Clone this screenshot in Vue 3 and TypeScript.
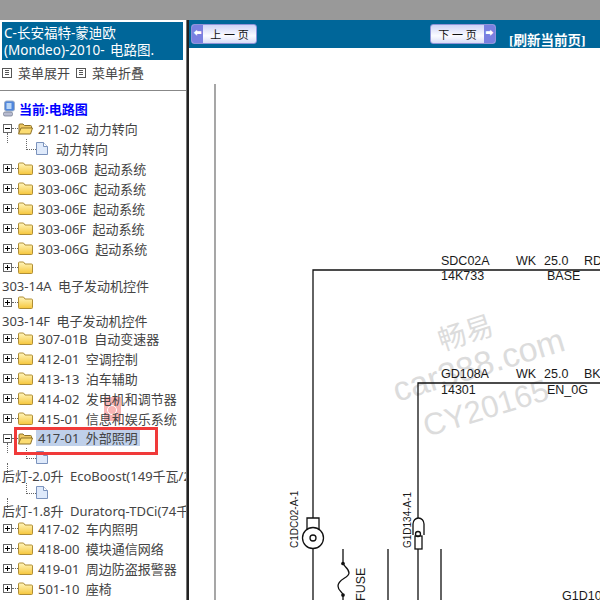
<script setup lang="ts">
interface Row { kind: 'folder' | 'open' | 'leaf' | 'wrapFolder' | 'wrapLeaf'; label: string }
const rows: Row[] = [
  { kind: 'open', label: '211-02 动力转向' },
  { kind: 'leaf', label: '动力转向' },
  { kind: 'folder', label: '303-06B 起动系统' },
  { kind: 'folder', label: '303-06C 起动系统' },
  { kind: 'folder', label: '303-06E 起动系统' },
  { kind: 'folder', label: '303-06F 起动系统' },
  { kind: 'folder', label: '303-06G 起动系统' },
  { kind: 'wrapFolder', label: '303-14A 电子发动机控件' },
  { kind: 'wrapFolder', label: '303-14F 电子发动机控件' },
  { kind: 'folder', label: '307-01B 自动变速器' },
  { kind: 'folder', label: '412-01 空调控制' },
  { kind: 'folder', label: '413-13 泊车辅助' },
  { kind: 'folder', label: '414-02 发电机和调节器' },
  { kind: 'folder', label: '415-01 信息和娱乐系统' },
  { kind: 'open', label: '417-01 外部照明' },
  { kind: 'wrapLeaf', label: '后灯-2.0升 EcoBoost(149千瓦/203马力)' },
  { kind: 'wrapLeaf', label: '后灯-1.8升 Duratorq-TDCi(74千瓦)' },
  { kind: 'folder', label: '417-02 车内照明' },
  { kind: 'folder', label: '418-00 模块通信网络' },
  { kind: 'folder', label: '419-01 周边防盗报警器' },
  { kind: 'folder', label: '501-10 座椅' },
]
const isFolder = (k: Row['kind']) => k === 'folder' || k === 'open' || k === 'wrapFolder'
const isLeaf = (k: Row['kind']) => k === 'leaf' || k === 'wrapLeaf'
const wrapped = (k: Row['kind']) => k === 'wrapFolder' || k === 'wrapLeaf'
</script>

<template>
  <div class="page">
    <div class="topbar"></div>
    <div class="main">
      <aside class="side">
        <div class="pink"><i></i></div>
        <div class="title">C-长安福特-蒙迪欧<br />(Mondeo)-2010- 电路图.</div>
        <div class="menu">
          <span class="menu-item"><i class="mi"></i>菜单展开</span>
          <span class="menu-item"><i class="mi"></i>菜单折叠</span>
        </div>
        <div class="tree">
          <div class="root">
            <svg width="14" height="17" viewBox="0 0 14 17">
              <rect x="2.500" y="1" width="10" height="10" rx="2" fill="#4f86dc" stroke="#9fb0c8" />
              <rect x="4.500" y="3" width="5" height="6" fill="#b9d6f7" />
              <rect x="1.500" y="12" width="9" height="4" rx="1.500" fill="#b8bcd0" stroke="#767e92" stroke-width=".8" />
            </svg>
            <span>当前:电路图</span>
          </div>
          <template v-for="(r, i) in rows" :key="i">
            <div class="row" :class="{ short: wrapped(r.kind), leafrow: isLeaf(r.kind), conn: r.kind === 'open' || r.kind === 'wrapLeaf' }">
              <span v-if="isFolder(r.kind)" class="exp" :class="{ minus: r.kind === 'open' }"></span>
              <span v-if="isFolder(r.kind)" class="dots"></span>
              <span v-if="isLeaf(r.kind)" class="elbow"></span>
              <svg v-if="isFolder(r.kind) && r.kind !== 'open'" class="ficon" width="15" height="13" viewBox="0 0 15 13">
                <defs>
                  <linearGradient id="fg" x1="0" y1="0" x2="0" y2="1">
                    <stop offset="0" stop-color="#fff6bf" />
                    <stop offset="1" stop-color="#f6c63a" />
                  </linearGradient>
                </defs>
                <path d="M.5 3V2q0-1 1-1h4l1.500 2h6.500q1 0 1 1v7.500q0 1-1 1h-12q-1 0-1-1z" fill="url(#fg)" stroke="#b08e35" />
              </svg>
              <svg v-if="r.kind === 'open'" class="ficon open" width="15" height="13" viewBox="0 0 15 13">
                <path d="M1 11V3q0-1 1-1h3l1.500 1.500h6q1 0 1 1V6" fill="#eec862" stroke="#8f7228" />
                <path d="M.5 12 3 6h11.500l-2 6z" fill="#fbdc72" stroke="#8f7228" />
              </svg>
              <svg v-if="isLeaf(r.kind)" class="licon" width="12" height="13" viewBox="0 0 12 13">
                <path d="M.5.500h7l4 4v8h-11z" fill="#dfeafb" stroke="#7b93bd" />
                <path d="M7.500.500v4h4" fill="#fff" stroke="#7b93bd" />
              </svg>
              <span v-if="!wrapped(r.kind)" class="label" :class="{ sel: r.label.startsWith('417-01'), leaflabel: isLeaf(r.kind) }">{{ r.label }}</span>
            </div>
            <div v-if="wrapped(r.kind)" class="wraptext">{{ r.label }}</div>
          </template>
        </div>
        <div class="redbox"></div>
      </aside>
      <section class="content">
        <div class="toolbar">
          <button class="btn prev"><span class="arrow">&#x2B05;</span><span class="cap">上 一 页</span></button>
          <button class="btn next"><span class="cap">下 一 页</span><span class="arrow">&#x27A1;</span></button>
          <span class="refresh">[刷新当前页]</span>
        </div>
        <svg class="diagram" width="411" height="552" viewBox="189 48 411 552">
          <g class="wm">
            <text transform="translate(442 351) rotate(-18)" font-size="28">畅易</text>
            <text transform="translate(397 402) rotate(-17)" font-size="34">car388.com</text>
            <text transform="translate(427 437) rotate(-17)" font-size="31">CY20165</text>
          </g>
          <g fill="none" stroke="#111" stroke-width="1.300">
            <path d="M215 84V600" stroke="#777" />
            <path d="M600 270H313V518M313 549V600" />
            <path d="M600 383H418V518M418 549V600" />
            <path d="M343 549V563C343 566 349 568 349 573C349 578 338 579 338 586C338 591 343 592 343 595V600" />
            <circle cx="343" cy="563.500" r="1.200" fill="#111" />
            <circle cx="343" cy="595" r="1.200" fill="#111" />
            <path d="M388 549V600M441 549V600" />
            <path d="M307 530V518H319V530" />
            <circle cx="313" cy="538" r="10.500" />
            <circle cx="313" cy="538" r="3" />
            <path d="M413 535V524A5.500 6 0 0 1 424 524V535" />
            <circle cx="418" cy="534" r="2.500" />
            <rect x="415" y="536" width="7" height="13" />
          </g>
          <g class="dt">
            <text x="441" y="265">SDC02A</text><text x="516" y="265">WK</text><text x="544" y="265">25.0</text><text x="584" y="265">RD</text>
            <text x="441" y="280">14K733</text><text x="547" y="280">BASE</text>
            <text x="441" y="378">GD108A</text><text x="516" y="378">WK</text><text x="544" y="378">25.0</text><text x="584" y="378">BK</text>
            <text x="441" y="394">14301</text><text x="547" y="394">EN_0G</text>
            <text x="562" y="600">G1D10</text>
            <text class="small" transform="translate(298 548) rotate(-90)">C1DC02-A-1</text>
            <text class="small" transform="translate(411 548) rotate(-90)">G1D134-A-1</text>
            <text transform="translate(365 601) rotate(-90)">FUSE</text>
          </g>
        </svg>
      </section>
    </div>
  </div>
</template>

<style scoped>
.page { width: 600px; height: 600px; overflow: hidden; display: flex; flex-direction: column; background: #fff; font-family: "Noto Sans", "Noto Sans CJK SC", sans-serif; }
.topbar { height: 20px; flex: none; background: #999; }
.main { flex: 1; display: flex; min-height: 0; }
.side { width: 187px; flex: none; position: relative; overflow: hidden; border-right: 1px solid #777; box-sizing: border-box; }
.title { margin: 2px 0 0 2px; width: 181px; height: 38px; background: #006699; color: #fff; font-size: 13.500px; word-spacing: 2px; line-height: 17px; padding: 3px 0 0 2px; box-sizing: border-box; white-space: nowrap; overflow: hidden; position: relative; }
.menu { height: 31px; display: flex; align-items: center; border-bottom: 1px solid #888; gap: 6px; padding-left: 2px; color: #444; font-size: 13px; margin-bottom: 7px; padding-bottom: 5px; box-sizing: border-box; position: relative; }
.menu-item { display: flex; align-items: center; }
.mi { display: inline-block; width: 8px; height: 8px; border: 1px solid #555; margin-right: 6px; background: linear-gradient(#555 0 0) center 1px / 4px 1px no-repeat, linear-gradient(#555 0 0) center 3px / 4px 1px no-repeat, linear-gradient(#555 0 0) center 5px / 4px 1px no-repeat; }
.tree { color: #444; font-size: 13px; word-spacing: 3px; white-space: nowrap; position: relative; }
.root { height: 20px; display: flex; align-items: center; gap: 3px; padding-left: 2px; color: #0000ff; font-weight: 700; }
.row { height: 20px; display: flex; align-items: center; padding-left: 3px; position: relative; }
.row.short { height: 18px; }
.exp { width: 7px; height: 7px; border: 1px solid #666; background: linear-gradient(#000 0 0) center / 5px 1px no-repeat, linear-gradient(#000 0 0) center / 1px 5px no-repeat; flex: none; }
.exp.minus { background: linear-gradient(#000 0 0) center / 5px 1px no-repeat; }
.dots { width: 6px; border-top: 1px dotted #666; flex: none; }
.ficon { margin-right: 5px; flex: none; }
.row.leafrow { padding-left: 26px; }
.elbow { width: 9px; height: 10px; border-left: 1px dotted #666; border-bottom: 1px dotted #666; margin-top: -8px; flex: none; }
.licon { flex: none; }
.leaflabel { margin-left: 8px; }
.conn::after { content: ""; position: absolute; left: 7px; top: 15px; height: 10px; border-left: 1px dotted #666; }
.label.sel { background: #bfd0ea; padding: 0 2px 0 2px; margin-left: -2px; line-height: 16px; }
.wraptext { height: 17px; line-height: 20px; padding-left: 2px; }
.pink { position: absolute; left: 104px; top: 377px; width: 17px; height: 24px; background: #f8a3a3; opacity: .8; }
.pink i { display: block; width: 10px; height: 10px; border: 1px solid #fff; border-radius: 50%; margin: 8px 3px; box-sizing: border-box; }
.redbox { position: absolute; left: 14px; top: 407px; width: 144px; height: 28px; border: 3px solid #f03a3a; box-sizing: border-box; }
.content { flex: 1; min-width: 0; border-left: 2px solid #222; display: flex; flex-direction: column; }
.toolbar { height: 28px; flex: none; background: #006699; display: flex; align-items: flex-start; padding: 4px 0 0 2px; box-sizing: border-box; }
.btn { width: 66px; height: 20px; padding: 0; border: 1px solid #8f93d8; border-radius: 3px; background: linear-gradient(#cfd3f6, #fbfbff 60%, #d9dcf6); display: flex; align-items: center; font-family: "Liberation Serif", "Noto Sans CJK SC", serif; font-size: 11px; color: #111; overflow: hidden; flex: none; }
.prev { margin-right: 173px; }
.next { margin-right: 13px; }
.cap { flex: 1; text-align: center; }
.arrow { width: 11px; height: 100%; background: #7a80e0; color: #fff; font-size: 8px; line-height: 18px; text-align: center; flex: none; }
.refresh { color: #fff; font-weight: 700; font-size: 13.500px; font-family: "Liberation Serif", "Noto Sans CJK SC", serif; margin-top: 5px; }
.diagram { display: block; flex: none; }
.wm text { fill: #dcdcdc; font-family: "Liberation Sans", "Noto Sans CJK SC", sans-serif; }
.dt text { fill: #1a1a1a; font-family: "Liberation Sans", sans-serif; font-size: 12.500px; }
.dt text.small { font-size: 10px; }
</style>
